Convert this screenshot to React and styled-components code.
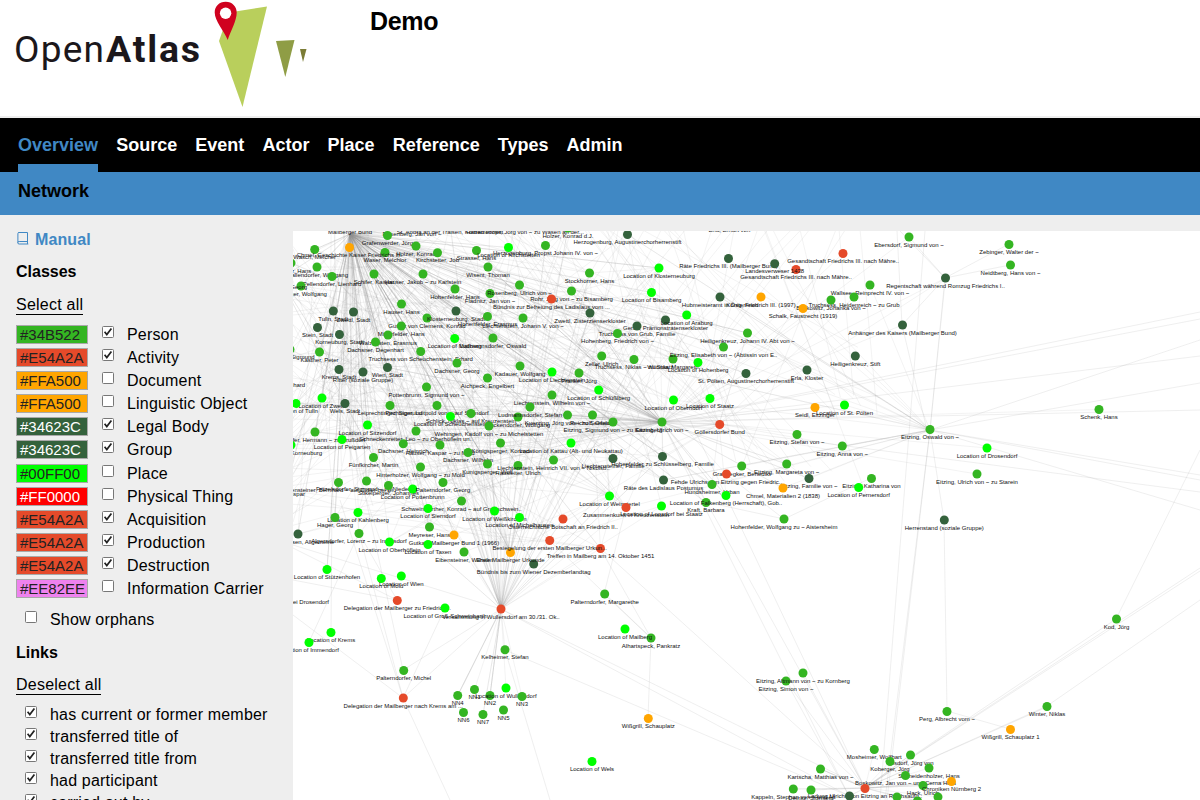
import React from "react";
import styled, { createGlobalStyle } from "styled-components";

const GlobalStyle = createGlobalStyle`
  * { box-sizing: border-box; }
  html, body { margin: 0; height: 100%; overflow: hidden; }
  body { background: #eee; color: #000; font-family: "Liberation Sans", Arial, sans-serif; font-size: 16px; }
`;

const Page = styled.div`
  display: flex;
  flex-direction: column;
  height: 100vh;
  overflow: hidden;
`;
const Header = styled.header`
  display: flex;
  flex: none;
  height: 118px;
  background: #fff;
  border-bottom: 2px solid #eee;
`;
const Logo = styled.svg`
  display: block;
  width: 370px;
  height: 116px;
`;
const SiteName = styled.h1`
  margin: 7px 0 0;
  font-size: 25px;
  line-height: 29px;
  letter-spacing: -0.3px;
`;
const MainNav = styled.nav`
  display: flex;
  flex: none;
  gap: 18.1px;
  height: 54px;
  padding: 0 18px;
  background: #000;
`;
const NavItem = styled.a`
  height: 54px;
  padding-top: 16px;
  font-size: 18px;
  line-height: 22px;
  font-weight: bold;
  color: ${(p) => (p.$active ? "#4088c4" : "#fff")};
  border-bottom: ${(p) => (p.$active ? "8px solid #4088c4" : "0")};
`;
const SubNav = styled.nav`
  flex: none;
  height: 43px;
  padding: 8px 18px;
  background: #4088c4;
  font-size: 18px;
  line-height: 22px;
  font-weight: bold;
`;
const Content = styled.main`
  display: flex;
  flex: 1;
  min-height: 0;
  padding-top: 16px;
`;
const Sidebar = styled.aside`
  flex: none;
  width: 293px;
  padding-left: 16px;
  overflow: hidden;
`;
const Manual = styled.a`
  display: flex;
  align-items: flex-start;
  gap: 6px;
  height: 18px;
  color: #4088c4;
  font-weight: bold;
  letter-spacing: 0.1px;
`;
const Heading = styled.h2`
  margin: ${(p) => p.$top}px 0 0;
  font-size: 16px;
  line-height: 20px;
  font-weight: bold;
`;
const ToggleAll = styled.a`
  display: block;
  width: max-content;
  margin: ${(p) => p.$top}px 0 ${(p) => p.$bottom}px;
  line-height: 19px;
  height: 20px;
  letter-spacing: 0.23px;
  border-bottom: 1px solid #000;
`;
const ClassRow = styled.label`
  display: flex;
  align-items: flex-start;
  height: 23.1px;
`;
const Swatch = styled.span`
  width: 72px;
  height: 19px;
  margin-right: 14px;
  padding-left: 3px;
  background: ${(p) => p.$color};
  color: ${(p) => (p.$light ? "#fff" : "#222")};
  border: 1px solid #a9a9a9;
  font-size: 15px;
  line-height: 18px;
`;
const LinkRow = styled.label`
  display: flex;
  align-items: flex-start;
  height: 22px;
  padding-left: 9px;
`;
const OrphansRow = styled(LinkRow)`
  margin: 8px 0 11px;
`;
const Check = styled.svg`
  flex: none;
  width: 12px;
  height: 12px;
  margin-top: 1px;
`;
const LabelText = styled.span`
  margin-left: 13px;
  line-height: 20px;
  letter-spacing: 0.18px;
  white-space: nowrap;
`;
const Graph = styled.svg`
  display: block;
  flex: 1;
  min-width: 0;
  height: 569px;
  background: #fff;
`;
const NodeLabel = styled.text`
  font-family: "Liberation Sans", Arial, sans-serif;
  font-size: 6px;
  fill: #111;
  text-anchor: middle;
`;

const classes = [
  ["#34B522", 1, "Person"], ["#E54A2A", 1, "Activity"], ["#FFA500", 0, "Document"],
  ["#FFA500", 0, "Linguistic Object"], ["#34623C", 1, "Legal Body"], ["#34623C", 1, "Group"],
  ["#00FF00", 0, "Place"], ["#FF0000", 0, "Physical Thing"], ["#E54A2A", 1, "Acquisition"],
  ["#E54A2A", 1, "Production"], ["#E54A2A", 1, "Destruction"], ["#EE82EE", 0, "Information Carrier"],
];
const lightText = ["#34623C", "#FF0000"];
const links = ["has current or former member", "transferred title of", "transferred title from", "had participant", "carried out by"];
const colors = { g: "#34B522", d: "#34623C", o: "#FFA500", r: "#E54A2A", l: "#00FF00" };

const nodes = [
  [350,224,"g","Mailberger Bund"],[412,226,"g","Rosenberg, Jan von ~"],[450,224,"g","St. Andrä an der Traisen, Konrad Propst"],[525,224,"g","Habemdorfer, Jörg von ~ zu Wasen an der..."],
  [568,228,"g","Holzer, Konrad d.J."],[732,222,"d","Erla, Erhart von ~"],[387.5,235.5,"g","Grafenwerder, Jörg"],[416,246,"g","Holzer, Konrad"],
  [314.7,249.5,"g","Wasch, Melcher"],[385,252.5,"g","Waser, Melchior"],[437.5,252.7,"g","Kirchstetter, Job"],
  [476.5,250.5,"g","Strasser, Hans"],[508.5,247.5,"l","Location of Kirchstetten"],[545.5,245.5,"g","Herzogenburg, Propst Johann IV. von ~"],[291,263,"g","Stuchser, Hans"],
  [317,267,"g","Wallendorfer, Wolfgang"],[332,276.5,"g","Pellendorfer, Lienhard"],[374,274,"g","Schifer, Kaspar"],[423,274,"g","Hauser, Jakob ~ zu Karlstein"],
  [349.5,247.5,"o","Chmel, Geschichte Kaiser Friedrichs III."],
  [488,267,"g","Wisent, Thoman"],[301,286,"g","Enzinger, Wolfgang"],[455,289,"g","Hohenfelder, Hans"],[490,293.5,"g","Fladnitz, Jan von ~"],
  [519.5,285,"g","Rosenberg, Ulrich von ~"],[401.5,304,"g","Hauser, Hans"],[427,318,"g","Guster von Clemens, Konrad"],[401.3,326,"g","Mitterfelder, Hans"],
  [388,335,"g","Walzkasten, Erasmus"],[375.5,342,"g","Dachsner, Degenhart"],[333.3,311,"d","Tulln, Stadt"],[353.5,312,"d","Zwettl, Stadt"],
  [317.5,327.5,"d","Stein, Stadt"],[339.5,334.5,"d","Korneuburg, Stadt"],[319.5,352,"g","Kastner, Peter"],[339,369.5,"d","Krems, Stadt"],
  [363,372,"d","Ritter (soziale Gruppe)"],[387.5,367.5,"d","Wien, Stadt"],[420.7,351.5,"g","Truchsess von Scheuchenstein, Erhard"],[456,311,"d","Klosterneuburg, Stadt"],
  [487.5,316.5,"g","Hohenfelder, Erasmus"],[454.7,338.5,"l","Location of Mailberg"],[493,338,"g","Ludmannsdorfer, Oswald"],[457,363,"g","Dachsner, Georg"],
  [523,318,"g","Liechtenstein, Johann V. von ~"],[571.5,291,"g","Rohr, Jörg von ~ zu Bisamberg"],[551.5,299,"r","Bündnis zur Befreiung des Ladislaus vom ..."],[589.5,273,"g","Stockhorner, Hans"],
  [627.5,234.5,"d","Herzogenburg, Augustinerchorherrenstift"],[590,313,"d","Zwettl, Zisterzienserkloster"],[665.5,320,"d","Geras, Prämonstratenserkloster"],[637,326,"d","Truchsess von Grub, Familie"],
  [617.5,333.5,"g","Hohenberg, Friedrich von ~"],[686.7,315,"l","Location of Araburg"],[659,268,"l","Location of Klosterneuburg"],[651.5,292.5,"l","Location of Bisamberg"],
  [728.5,258.5,"d","Räte Friedrichs III. (Mailberger Bund)"],[720,297,"d","Hubmeisteramt in Österreich"],[601.7,356,"g","Zeller, Ulrich"],[634,359.5,"g","Truchsess, Niklas ~ zu Staatz"],
  [673,359,"g","Würmla, Margareth"],[698,362.5,"l","Location of Hohenberg"],[723.5,347,"g","Eitzing, Elisabeth von ~ (Äbtissin von E.."],[747.5,333,"g","Heiligenkreuz, Johann IV. Abt von ~"],
  [746,373.5,"d","St. Pölten, Augustinerchorherrenstift"],[520,366,"g","Kadauer, Wolfgang"],[552,372,"l","Location of Liechtenstein"],[579,373,"g","Pranker, Jörg"],
  [909,237,"g","Ebersdorf, Sigmund von ~"],[1009,244.5,"g","Zebinger, Walter der ~"],[1010.5,265,"g","Neidtberg, Hans von ~"],[843,253.5,"r","Gesandtschaft Friedrichs III. nach Mähre.."],
  [796,269.5,"r","Gesandtschaft Friedrichs III. nach Mähre.."],[774.7,263.7,"d","Landesverweser 1438"],[945.5,278,"d","Regentschaft während Romzug Friedrichs I.."],[870,285,"g","Wallsee, Reinprecht IV. von ~"],
  [854,297,"g","Truchsess, Heidenreich ~ zu Grub"],[831,300,"g","Boskowitz, Johanka von ~"],[761,297,"o","König, Friedrich III. (1997)"],[803,308.5,"o","Schalk, Faustrecht (1919)"],
  [902.5,325,"d","Anhänger des Kaisers (Mailberger Bund)"],[855.3,356,"d","Heiligenkreuz, Stift"],[807,370,"d","Erla, Kloster"],[815,407.5,"o","Seidl, Eitzinger"],
  [844.5,405,"l","Location of St. Pölten"],[1099,409.5,"g","Schenk, Hans"],[1116.5,619,"g","Kod, Jörg"],[426.5,387,"g","Pottenbrunn, Sigmund von ~"],
  [487.5,378,"g","Aichpeck, Engelbert"],[322,398,"l","Location of Zwettl"],[296,403.5,"l","Location of Tulln"],[345,403.5,"d","Wels, Stadt"],
  [390,405.5,"g","Leiprechtinger, Sigmund"],[437,405.5,"g","Pirchinger, Luitpold von ~ auf Sierndorf"],[471,413.5,"g","Schlick, Niklas ~ auf Kreuzenstein"],[450.5,416.5,"l","Location of Scheuchenstein"],
  [518,417,"g","Ruckendorfer, Wolfgang"],[489,426,"g","Wehingen, Kadolf von ~ zu Michelstetten"],[367.5,425,"l","Location of Sitzendorf"],[315,432,"g","Drachsdorfer, Hermann ~ zu Prußdorf"],
  [342,439.5,"l","Location of Peigarten"],[416,431,"g","Schneckenreiter, Leo ~ zu Oberhöflein un.."],[403.3,443.7,"g","Dachsner, Heinrich"],[440,445,"g","Hauser, Kaspar ~ zu Mold"],
  [500.5,443,"g","Königsperger, Konrad"],[468,452.5,"g","Dachsner, Wilhelm"],[373.5,457.5,"g","Fünfkircher, Martin"],[420.5,467,"g","Hinterholzer, Wolfgang ~ zu Mold"],
  [487.5,464,"g","Kunigsperger, Wolf"],[518,465.5,"g","Hausleiter, Ulrich"],[338.5,482.5,"g","Enkensteiner, Bernhard ~ auf Cidler bei Di.."],[366.5,481,"g","Fritzelsdorfer, Sigmund ~ zu Nieder-..."],
  [388.5,485.5,"g","Stikelperger, Johannes"],[412.7,489,"l","Location of Pottenbrunn"],[443,482.5,"g","Palterndorfer, Georg"],[461.5,501,"g","Schweinwarther, Konrad ~ auf Großschwein.."],
  [428,508.5,"l","Location of Sierndorf"],[494.5,511,"l","Location of Weißkirchen"],[519.5,517.5,"l","Location of Michelhausen"],[358,512.5,"l","Location of Kahlenberg"],
  [335,517.5,"g","Hager, Georg"],[291,445,"l","Location of Korneuburg"],[598.7,390,"l","Location of Schlüßlberg"],[552,395,"g","Liechtenstein, Wilhelm von ~"],
  [530,407,"g","Ludmannsdorfer, Stefan"],[567.5,415,"g","Kuenring, Jörg von ~ zu Seefeld"],[592.5,415,"g","Reicholf, Oswald"],[613,422,"g","Eitzing, Sigmund von ~ zu Kaumberg"],
  [662,422,"g","Eitzing, Ulrich von ~"],[673.5,400,"l","Location of Oberndorf"],[710,398.5,"l","Location of Staatz"],[719.7,424.5,"r","Göllersdorfer Bund"],
  [571,443,"l","Location of Kattau (Alt- und Neukattau)"],[553.5,460,"g","Liechtenstein, Heinrich VII. von ~ Nikolsb.."],[613,458.5,"d","Liechtensteiner, Familie"],[662.5,456.5,"d","Hohenfelder zu Schlüsselberg, Familie"],
  [663.5,480,"d","Räte des Ladislaus Postumus"],[741.7,466,"g","Grabnegker, Benedikt"],[726.5,474,"r","Fehde Ulrichs von Eitzing gegen Friedric.."],[712,484.5,"g","Hundsheimer, Urban"],
  [706,502.5,"g","Kraft, Barbara"],[726,495.5,"l","Location of Falkenberg (Herrschaft), Gob.."],[609.5,496,"l","Location of Weinviertel"],[661.5,506,"l","Location of Loosdorf bei Staatz"],
  [626,507.5,"r","Zusammenkunft in Kreuzenstein"],[563,519,"r","Österreichische Botschaft an Friedrich II.."],[429.5,527,"g","Meyreser, Hans"],[359,533.5,"g","Algersdorfer, Lorenz ~ zu Inzersdorf"],
  [298,534,"d","Bundgenossen, Allgemeine"],[389.5,542,"l","Location of Oberhöflein"],[454,535,"o","Gutkas, Mailberger Bund 1 (1966)"],[428,544.5,"l","Location of Taxen"],
  [464,552,"g","Eibensteiner, Wilhelm"],[533.7,564,"d","Bündnis bis zum Wiener Dezemberlandtag"],[510.5,552.5,"o","Erste Mailberger Urkunde"],[600.5,548.5,"r","Treffen in Mailberg am 14. Oktober 1451"],
  [549.7,540.5,"r","Besiegelung der ersten Mailberger Urkun..."],[604.7,594,"g","Palterndorfer, Margarethe"],[327,569.5,"l","Location of Stützenhofen"],[381.3,578.5,"l","Location of Mold"],
  [401.3,576,"l","Location of Wien"],[397.3,600.5,"r","Delegation der Mailberger zu Friedrich..."],[445,608,"l","Location of Groß-Schweinbarth"],[501,609,"r","Versammlung in Wullersdorf am 30./31. Ok.."],
  [275,594,"l","Location of Primmersdorf bei Drosendorf"],[331,632.5,"l","Location of Krems"],[309,642.5,"l","Location of Immendorf"],[505,649.7,"g","Kelheimer, Stefan"],
  [403.7,670.5,"g","Palterndorfer, Michel"],[403.3,698,"r","Delegation der Mailberger nach Krems am ..."],[457.7,695.5,"g","NN4"],[474.5,689.5,"g","NN1"],
  [490,695.5,"g","NN2"],[506,688,"l","Location of Wullersdorf"],[522,696.5,"g","NN3"],[463.5,712.5,"g","NN6"],
  [483,714.5,"g","NN7"],[503.5,710,"g","NN5"],[651,638,"g","Alhartspeck, Pankratz"],[625,629,"l","Location of Mailberg"],
  [648.3,718.5,"o","Wißgrill, Schauplatz"],[592,761.5,"l","Location of Wels"],[797,434.5,"g","Eitzing, Stefan von ~"],[842.3,446,"g","Eitzing, Anna von ~"],
  [786.7,464,"g","Eitzing, Margareta von ~"],[809,478.5,"d","Eitzing, Familie von ~"],[783,488,"o","Chmel, Materialien 2 (1838)"],[871.5,478.5,"g","Eitzing, Katharina von"],
  [858.7,487.5,"l","Location of Pernersdorf"],[784,519,"g","Hohenfelder, Wolfgang zu ~ Aistersheim"],[930,429.5,"g","Eitzing, Oswald von ~"],[987,448,"l","Location of Drosendorf"],
  [977,474,"g","Eitzing, Ulrich von ~ zu Starein"],[944.3,520,"d","Herrenstand (soziale Gruppe)"],[786,681,"g","Eitzing, Simon von ~"],[803,673,"g","Eitzing, Altmann von ~ zu Kornberg"],
  [947,711.5,"g","Perg, Albrecht vom ~"],[1047,706.5,"g","Winter, Niklas"],[1010.5,729.5,"o","Wißgrill, Schauplatz 1"],[874.3,749.5,"g","Mosheimer, Wolfhart"],
  [910.5,755,"g","Losdorf, Jörg von"],[890,761.5,"g","Koberger, Jörg"],[929,768,"g","Schneidenholzer, Hans"],[905.5,775.5,"g","Boskowitz, Jan von ~ und Cerna Hora"],
  [923,785.5,"g","Hack, Ulrich"],[951.5,781.5,"o","Chroniken Nürnberg 2"],[820.5,769,"g","Kartscha, Matthias von ~"],[793.3,789,"g","Kappeln, Stephan von ~ und Alt"],
  [811,790,"g","Deinitz, Sigmund"],[865,788.5,"r","Ladung Ulrichs von Eitzing an Reichsaufg.."],[849.5,796,"d",""],[897,797,"g",""],[938,797,"g",""],[917.5,801,"g",""],
  [280,279,"g","Enzersdorfer, Georg"],[290,349.5,"g","Maissau, Sigmund"],[283,377,"g","Fuchs, Bernhard"],[287,486.5,"g","Stein, Kaspar"],
];

function seeded(seed) {
  let s = seed;
  return () => {
    s = (s * 16807) % 2147483647;
    return s / 2147483647;
  };
}

const edges = [
  [930,430,885,800],[930,430,887,800],[925,231,880,800],[945,278,930,430],[930,430,944,520],[944,520,947,711],
  [865,788,1200,568],[865,788,1200,571],[865,788,1047,706],[865,788,1047,707],[1116,619,865,788],[1047,706,1200,600],[947,711,1010,729],
  [865,788,803,673],[865,788,786,681],[865,788,690,420],[865,788,662,422],[849,796,662,422],[849,796,501,609],[865,788,501,609],[849,796,505,650],[865,788,600,548],[849,796,786,681],
  [930,430,1200,383],[930,430,1200,340],[930,430,1200,475],[930,430,1200,480],[930,430,1200,510],[662,422,1200,492],[662,422,1200,410],[662,422,1200,356],[662,422,1200,312],[662,422,1200,319],
  [945,278,1009,244],[945,278,1010,265],[945,278,900,231],[1116,619,1200,450],
  [651,638,648,718],[651,638,600,548],[651,638,549,540],[604,594,651,638],[604,594,626,507],
  [505,650,550,800],[403,698,450,800],[403,698,340,500],[403,698,359,533],[403,698,293,615],[403,698,445,608],[403,698,501,609],[403,670,501,609],[403,670,345,403],
  [331,632,332,500],[309,642,359,533],[397,600,359,533],[397,600,293,548],[397,600,293,580],[501,609,293,545],
  [784,519,871,478],[784,519,706,502],[784,519,726,474],[902,325,945,278],[902,325,927,430],[902,325,897,231],[945,278,909,237],
];

const random = seeded(81);
const web = [];
const hub = (x, y, count, test) => {
  const targets = nodes.filter(test);
  for (let i = 0; i < count; i += 1) {
    const t = targets[Math.floor(random() * targets.length)];
    web.push([x, y, t[0], t[1]]);
  }
};
hub(350, 234, 210, (n) => n[0] < 760 && n[1] < 570);
hub(662, 422, 105, (n) => n[1] < 530);
hub(501, 609, 62, (n) => n[1] < 560 && n[0] > 390 && n[0] < 680);
hub(501, 609, 14, (n) => n[1] > 640 && n[0] > 440 && n[0] < 530);
hub(865, 788, 28, (n) => n[1] > 740 && n[0] > 780);
hub(930, 430, 26, (n) => n[1] < 540 && n[0] > 600 && n[0] < 1000);
hub(719, 424, 24, (n) => n[1] < 540 && n[0] > 380 && n[0] < 1000);
hub(510, 552, 22, (n) => n[1] < 540 && n[0] < 700);
const dense = nodes.filter((n) => n[0] < 690 && n[1] < 555);
for (let i = 0; i < 190; i += 1) {
  const a = dense[Math.floor(random() * dense.length)];
  const b = dense[Math.floor(random() * dense.length)];
  web.push([a[0], a[1], b[0], b[1]]);
}
for (let i = 0; i < 55; i += 1) {
  web.push([480 + random() * 380, 225, 480 + random() * 400, 330 + random() * 170]);
  web.push([293, 235 + random() * 300, 330 + random() * 200, 231 + random() * 320]);
}
for (let i = 0; i < 14; i += 1) {
  const x = 330 + random() * 40;
  web.push([x, 231, x - 8 + random() * 16, 400 + random() * 80]);
}

function LogoArt() {
  return (
    <Logo viewBox="0 0 370 116" role="img" aria-label="OpenAtlas">
      <text x="14" y="62" textLength="90" lengthAdjust="spacing" fontFamily="Roboto, sans-serif" fontSize="37" fontWeight="400" fill="#1b171b">Open</text>
      <text x="106" y="62" textLength="94" lengthAdjust="spacing" fontFamily="Roboto, sans-serif" fontSize="37.5" fontWeight="700" fill="#1b171b">Atlas</text>
      <path d="M229 12.5 267 6.5 242.5 107 219 41Z" fill="#b9cf5c" />
      <path d="M276 41 294.5 40 285.3 77Z" fill="#8f9d45" />
      <path d="M300 49 306.5 49 303 62Z" fill="#7b7c36" />
      <path d="M225.7 1.7C219 1.7 214.7 6.5 214.7 12.5 214.7 21 224 31 227.7 40 230.7 31 236.7 21 236.7 12.5 236.7 6.5 232.2 1.7 225.7 1.7Z" fill="#d0021f" />
      <circle cx="225.6" cy="13.2" r="5.7" fill="#fff" />
    </Logo>
  );
}

function CheckBox({ checked }) {
  return (
    <Check viewBox="0 0 12 12">
      <rect x="0.5" y="0.5" width="11" height="11" rx="1" fill="#fff" stroke="#777" />
      {checked ? <path d="M2.6 5.8 4.8 8.6 9.4 2.5" fill="none" stroke="#222" strokeWidth="1.7" /> : null}
    </Check>
  );
}

export default function App() {
  return (
    <Page>
      <GlobalStyle />
      <Header>
        <LogoArt />
        <SiteName>Demo</SiteName>
      </Header>
      <MainNav>
        {["Overview", "Source", "Event", "Actor", "Place", "Reference", "Types", "Admin"].map((name, i) => (
          <NavItem key={name} $active={i === 0}>{name}</NavItem>
        ))}
      </MainNav>
      <SubNav>Network</SubNav>
      <Content>
        <Sidebar>
          <Manual>
            <svg width="13" height="14" viewBox="0 0 13 14" fill="none" stroke="#4088c4">
              <path d="M2.5 1.5H11.5V10.5H3.2Q1.7 10.5 1.7 11.7 1.7 13 3.2 13H12.3M1.9 11.5V2.5Q1.9 1.5 3 1.5M11.5 10V13" />
            </svg>
            Manual
          </Manual>
          <Heading $top={13}>Classes</Heading>
          <ToggleAll $top={13} $bottom={10}>Select all</ToggleAll>
          {classes.map(([color, checked, name]) => (
            <ClassRow key={name}>
              <Swatch $color={color} $light={lightText.includes(color)}>{color}</Swatch>
              <CheckBox checked={checked} />
              <LabelText>{name}</LabelText>
            </ClassRow>
          ))}
          <OrphansRow>
            <CheckBox />
            <LabelText>Show orphans</LabelText>
          </OrphansRow>
          <Heading $top={0}>Links</Heading>
          <ToggleAll $top={12} $bottom={10}>Deselect all</ToggleAll>
          {links.map((name) => (
            <LinkRow key={name}>
              <CheckBox checked />
              <LabelText>{name}</LabelText>
            </LinkRow>
          ))}
        </Sidebar>
        <Graph viewBox="293 231 907 569">
          <g stroke="#999" strokeWidth="0.6" strokeOpacity="0.2">
            {web.map((e, i) => <line key={i} x1={e[0]} y1={e[1]} x2={e[2]} y2={e[3]} />)}
          </g>
          <g stroke="#999" strokeWidth="0.8" strokeOpacity="0.2">
            {edges.map((e, i) => <line key={i} x1={e[0]} y1={e[1]} x2={e[2]} y2={e[3]} />)}
          </g>
          {nodes.map(([x, y, c, label], i) => (
            <g key={i}>
              <circle cx={x} cy={y} r="4.5" fill={colors[c]} />
              <NodeLabel x={x} y={y + 9.5}>{label}</NodeLabel>
            </g>
          ))}
        </Graph>
      </Content>
    </Page>
  );
}
